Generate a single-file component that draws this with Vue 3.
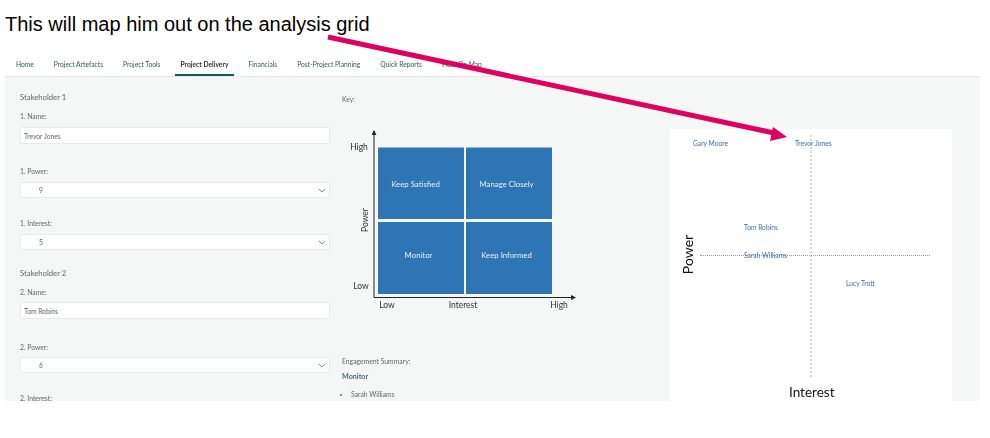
<script setup>
const tabs = ['Home', 'Project Artefacts', 'Project Tools', 'Project Delivery', 'Financials', 'Post-Project Planning', 'Quick Reports', 'Heat On Map']
const names = [
  { t: 'Gary Moore', x: 23, y: 13.5 },
  { t: 'Trevor Jones', x: 125, y: 13.5 },
  { t: 'Tom Robins', x: 74, y: 98 },
  { t: 'Sarah Williams', x: 74, y: 126 },
  { t: 'Lucy Trott', x: 176, y: 154 }
]
</script>

<template>
  <div class="page">
    <h1 class="title">This will map him out on the analysis grid</h1>
    <div class="soft">
      <nav class="tabs">
        <span v-for="(t, i) in tabs" :key="t" class="tab" :class="{ active: i === 3 }">{{ t }}</span>
      </nav>
      <main class="panel">
        <section class="form">
          <h2 class="group">Stakeholder 1</h2>
          <label class="lbl">1. Name:</label>
          <div class="field name first">Trevor Jones</div>
          <label class="lbl l-sel">1. Power:</label>
          <div class="field sel first">9<svg class="chev" viewBox="0 0 10 6"><path d="M1 1l4 4 4-4" fill="none" stroke="#666" stroke-width="1" /></svg></div>
          <label class="lbl l-sel2">1. Interest:</label>
          <div class="field sel first">5<svg class="chev" viewBox="0 0 10 6"><path d="M1 1l4 4 4-4" fill="none" stroke="#666" stroke-width="1" /></svg></div>
          <h2 class="group g2">Stakeholder 2</h2>
          <label class="lbl">2. Name:</label>
          <div class="field name">Tom Robins</div>
          <label class="lbl l-sel3">2. Power:</label>
          <div class="field sel">6<svg class="chev" viewBox="0 0 10 6"><path d="M1 1l4 4 4-4" fill="none" stroke="#666" stroke-width="1" /></svg></div>
          <label class="lbl l-sel4">2. Interest:</label>
        </section>
        <section class="key">
          <div class="lbl key-lbl">Key:</div>
          <svg class="matrix" width="240" height="190" viewBox="0 0 240 190">
            <defs>
              <marker id="ah" markerWidth="5" markerHeight="5" refX="4" refY="2.5" orient="auto"><path d="M0 0L5 2.5L0 5z" fill="#222" /></marker>
            </defs>
            <rect x="36" y="25.5" width="86" height="71.5" fill="#2e75b6" />
            <rect x="124" y="25.5" width="86" height="71.5" fill="#2e75b6" />
            <rect x="36" y="100" width="86" height="72" fill="#2e75b6" />
            <rect x="124" y="100" width="86" height="72" fill="#2e75b6" />
            <path d="M32 175.5V9" stroke="#222" stroke-width="1" marker-end="url(#ah)" fill="none" />
            <path d="M32 175.5H233" stroke="#222" stroke-width="1" marker-end="url(#ah)" fill="none" />
            <g class="cell">
              <text x="73.5" y="65" text-anchor="middle">Keep Satisfied</text>
              <text x="164.5" y="65" text-anchor="middle">Manage Closely</text>
              <text x="76.5" y="136" text-anchor="middle">Monitor</text>
              <text x="164.5" y="136" text-anchor="middle">Keep Informed</text>
            </g>
            <g class="axis">
              <text x="17" y="28" text-anchor="middle">High</text>
              <text x="19" y="167" text-anchor="middle">Low</text>
              <text x="45" y="186" text-anchor="middle">Low</text>
              <text x="121" y="186" text-anchor="middle">Interest</text>
              <text x="217" y="186" text-anchor="middle">High</text>
              <text transform="translate(26 98) rotate(-90)" text-anchor="middle">Power</text>
            </g>
          </svg>
          <div class="lbl summary">Engagement Summary:</div>
          <div class="quad">Monitor</div>
          <ul class="list"><li>Sarah Williams</li></ul>
        </section>
        <section class="grid">
          <div class="v"></div>
          <div class="h"></div>
          <span v-for="n in names" :key="n.t" class="name-pin" :style="{ left: n.x + 'px', top: n.y + 'px' }">{{ n.t }}</span>
          <span class="gy">Power</span>
          <span class="gx">Interest</span>
        </section>
      </main>
    </div>
    <svg class="arrow" width="990" height="438" viewBox="0 0 990 438">
      <path d="M328 37L774 133" stroke="#e0005f" stroke-width="5" fill="none" />
      <path d="M773 127L787 137L770 141z" fill="#e0005f" />
    </svg>
  </div>
</template>

<style>
html, body { margin: 0; background: #fff; }
</style>

<style scoped>
.page { position: relative; width: 990px; height: 438px; overflow: hidden; background: #fff; font-family: Lato, sans-serif; color: #555; }
.title { margin: 0; padding: 11px 0 0 5px; height: 50px; box-sizing: border-box; font: 400 20px/26px "Liberation Sans", sans-serif; color: #000; }
.soft { filter: blur(0.35px); }
.tabs { display: flex; gap: 8px; margin-left: 10px; height: 26px; align-items: stretch; }
.tab { padding: 0 6px; font-size: 6.7px; line-height: 28px; color: #2f5a5a; white-space: nowrap; }
.tab.active { font-weight: 700; color: #333; border-bottom: 2px solid #0f5c55; box-sizing: border-box; }
.panel { display: flex; margin-left: 5px; width: 975px; height: 325px; overflow: hidden; background: #f5f7f7; border-top: 1px solid #e6e8e8; box-sizing: border-box; }
.form { width: 310px; margin-left: 15px; padding-top: 14px; flex: none; }
.group { margin: 0; font-size: 7.7px; line-height: 12px; font-weight: 400; color: #666; }
.g2 { margin-top: 17px; }
.lbl { display: block; margin-top: 8px; font-size: 6.8px; line-height: 10px; color: #666; }
.field { box-sizing: border-box; background: #fff; border: 1px solid #e8eaea; border-radius: 2px; font-size: 6.7px; color: #666; display: flex; align-items: center; position: relative; }
.name { height: 17px; margin-top: 5px; padding-left: 3px; }
.sel { height: 16px; margin-top: 5px; padding-left: 18px; }
.first { margin-top: 6px; }
.chev { position: absolute; right: 3px; top: 5px; width: 8px; height: 5px; }
.l-sel { margin-top: 22px; }
.l-sel2 { margin-top: 20px; }
.l-sel3 { margin-top: 23px; }
.l-sel4 { margin-top: 20px; }
.key { width: 328px; flex: none; margin-left: 12px; padding-top: 8px; position: relative; }
.key-lbl { margin-top: 9px; }
.matrix { display: block; margin: 18px 0 0 0; overflow: visible; }
.cell text { fill: #e8f0f8; font: 7.8px Lato, sans-serif; }
.axis text { fill: #333; font: 8.5px Lato, sans-serif; }
.summary { margin-top: 44px; }
.quad { margin-top: 6px; font-size: 7.2px; font-weight: 700; color: #4a6a7a; line-height: 10px; }
.list { margin: 7px 0 0; padding-left: 9px; font-size: 6.8px; line-height: 10px; color: #666; }
.grid { position: relative; width: 282px; height: 272px; margin-top: 52px; flex: none; background: #fff; font-size: 6.7px; }
.v { position: absolute; left: 140px; top: 6px; height: 242px; border-left: 2px dotted #d8d8d8; }
.h { position: absolute; left: 30px; top: 126px; width: 230px; border-top: 1px dotted #999; }
.name-pin { position: absolute; transform: translateY(-50%); line-height: 10px; color: #3f6ea3; white-space: nowrap; }
.gy { position: absolute; left: -2px; top: 117px; font: 14px Lato, sans-serif; color: #111; transform-origin: center; transform: rotate(-90deg); }
.gx { position: absolute; left: 119px; top: 255px; font: 13.5px Lato, sans-serif; color: #111; }
.arrow { position: absolute; left: 0; top: 0; pointer-events: none; }
</style>
